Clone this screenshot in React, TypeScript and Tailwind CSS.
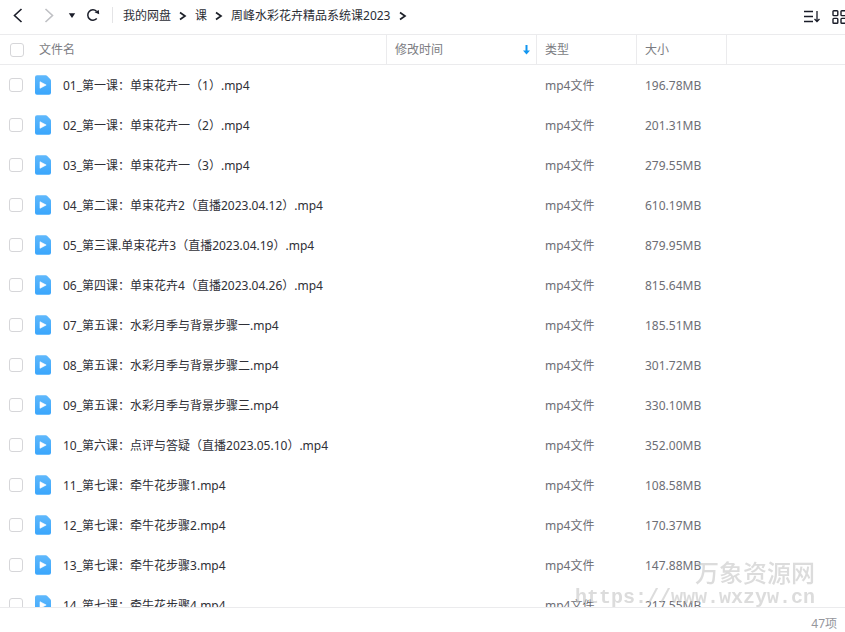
import { useState } from "react";

const files = [
  { name: "01_第一课：单束花卉一（1）.mp4", size: "196.78MB" },
  { name: "02_第一课：单束花卉一（2）.mp4", size: "201.31MB" },
  { name: "03_第一课：单束花卉一（3）.mp4", size: "279.55MB" },
  { name: "04_第二课：单束花卉2（直播2023.04.12）.mp4", size: "610.19MB" },
  { name: "05_第三课.单束花卉3（直播2023.04.19）.mp4", size: "879.95MB" },
  { name: "06_第四课：单束花卉4（直播2023.04.26）.mp4", size: "815.64MB" },
  { name: "07_第五课：水彩月季与背景步骤一.mp4", size: "185.51MB" },
  { name: "08_第五课：水彩月季与背景步骤二.mp4", size: "301.72MB" },
  { name: "09_第五课：水彩月季与背景步骤三.mp4", size: "330.10MB" },
  { name: "10_第六课：点评与答疑（直播2023.05.10）.mp4", size: "352.00MB" },
  { name: "11_第七课：牵牛花步骤1.mp4", size: "108.58MB" },
  { name: "12_第七课：牵牛花步骤2.mp4", size: "170.37MB" },
  { name: "13_第七课：牵牛花步骤3.mp4", size: "147.88MB" },
  { name: "14_第七课：牵牛花步骤4.mp4", size: "217.55MB" },
];

const path = ["我的网盘", "课", "周峰水彩花卉精品系统课2023"];

const checkboxClass =
  "block size-3.5 shrink-0 appearance-none rounded-[3px] border border-[#d6d6d9] bg-white checked:border-[#06a7ff] checked:bg-[#06a7ff]";

function VideoIcon() {
  return (
    <svg width="16" height="20" viewBox="0 0 16 20" className="shrink-0" aria-hidden="true">
      <defs>
        <linearGradient id="video-fill" x1="0" y1="0" x2="0" y2="1">
          <stop offset="0" stopColor="#5fb8fc" />
          <stop offset="1" stopColor="#3aa6fc" />
        </linearGradient>
      </defs>
      <path
        d="M2 .3h8.800q.8 0 1.400.6l3.200 3.400q.6.6.6 1.400v12a2 2 0 0 1-2 2H2a2 2 0 0 1-2-2V2.300a2 2 0 0 1 2-2z"
        fill="url(#video-fill)"
      />
      <path d="M5 6.700v6.600l6.200-3.300z" fill="#fff" stroke="#fff" strokeWidth=".6" strokeLinejoin="round" />
    </svg>
  );
}

function Separator() {
  return (
    <svg width="8" height="10" viewBox="0 0 8 10" fill="none" stroke="#1d2129" strokeWidth="1.700" aria-hidden="true">
      <path d="M1 1.500 6 5 1 8.500" />
    </svg>
  );
}

function Toolbar() {
  return (
    <header className="flex h-[34px] shrink-0 items-center overflow-hidden pb-1 pl-3">
      <nav aria-label="导航" className="flex items-center">
        <button aria-label="后退" className="w-3">
          <svg width="12" height="16" viewBox="0 0 12 16" fill="none" stroke="#1a1d29" strokeWidth="1.600">
            <path d="M9.500 2 2.500 8.500l7 6.500" />
          </svg>
        </button>
        <button aria-label="前进" className="ml-5 w-3" disabled>
          <svg width="12" height="16" viewBox="0 0 12 16" fill="none" stroke="#bfc0c4" strokeWidth="1.600">
            <path d="M1.500 2l7 6.500-7 6.500" />
          </svg>
        </button>
        <button aria-label="历史记录" className="ml-3 w-2">
          <svg width="8" height="16" viewBox="0 0 8 16" fill="#1a1d29">
            <path d="M.8 6.200h6.400L4 11z" />
          </svg>
        </button>
        <button aria-label="刷新" className="ml-2.5 w-3.5">
          <svg width="14" height="16" viewBox="0 0 14 16" fill="none" stroke="#1a1d29" strokeWidth="1.500">
            <path d="M10.500 4.200A5.200 5.200 0 1 0 10.800 11.600" />
            <path d="M8.500 5.200 12.800 3l.4 4.200z" fill="#1a1d29" stroke="none" />
          </svg>
        </button>
      </nav>
      <span className="ml-3 mr-2.5 h-4 w-px bg-[#e4e4e6]" />
      <nav aria-label="路径" className="flex items-center gap-2 whitespace-nowrap pt-px text-[#2b2d35]">
        {path.map((item) => (
          <span key={item} className="flex items-center gap-2">
            <a href="#">{item}</a>
            <Separator />
          </span>
        ))}
      </nav>
      <div className="-mr-0.5 ml-auto flex shrink-0 items-center gap-3 pt-1">
        <button aria-label="排序">
          <svg width="17" height="14" viewBox="0 0 17 14" fill="none" stroke="#1a1d29" strokeWidth="1.300">
            <path d="M1 1.500h9M1 6.500h9M1 11.500h9" />
            <path d="M14 1v10.500M11.500 9l2.500 2.500L16.500 9" />
          </svg>
        </button>
        <button aria-label="网格视图">
          <svg width="15" height="14" viewBox="0 0 15 14" fill="none" stroke="#1a1d29" strokeWidth="1.400">
            <rect x="1" y=".8" width="4.800" height="4.800" rx=".8" />
            <rect x="9" y=".8" width="4.800" height="4.800" rx=".8" />
            <rect x="1" y="8.400" width="4.800" height="4.800" rx=".8" />
            <rect x="9" y="8.400" width="4.800" height="4.800" rx=".8" />
          </svg>
        </button>
      </div>
    </header>
  );
}

export default function App() {
  const [selected, setSelected] = useState<string[]>([]);

  const toggle = (name: string) => {
    setSelected((prev) =>
      prev.includes(name) ? prev.filter((n) => n !== name) : [...prev, name]
    );
  };

  const toggleAll = () => {
    setSelected(selected.length === files.length ? [] : files.map((f) => f.name));
  };

  return (
    <div className="relative flex h-screen flex-col overflow-hidden bg-white font-['Noto_Sans','Noto_Sans_CJK_SC',sans-serif] text-xs text-[#2f3037]">
      <Toolbar />

      <main className="min-h-0 flex-1 overflow-y-auto border-t border-[#ebebed] [scrollbar-width:none]">
        <table className="w-full table-fixed border-separate border-spacing-0 text-left">
          <colgroup>
            <col className="w-[387px]" />
            <col className="w-[150px]" />
            <col className="w-[100px]" />
            <col className="w-[90px]" />
            <col />
          </colgroup>
          <thead className="sticky top-0 bg-white text-[#7b7c82]">
            <tr className="h-[30px] *:border-b *:border-[#ebebed] *:p-0 *:font-normal">
              <th className="border-r">
                <div className="flex items-center pl-2.5">
                  <input
                    type="checkbox"
                    aria-label="全选"
                    className={checkboxClass}
                    checked={selected.length === files.length}
                    onChange={toggleAll}
                  />
                  <span className="ml-[15px]">文件名</span>
                </div>
              </th>
              <th className="border-r">
                <button className="flex w-full items-center justify-between pl-2 pr-1.5">
                  修改时间
                  <svg width="7" height="10" viewBox="0 0 7 10" fill="#1296f0" aria-hidden="true">
                    <path d="M2.500 0h2v5.500H7L3.500 9.500 0 5.500h2.500z" />
                  </svg>
                </button>
              </th>
              <th className="border-r">
                <span className="pl-2">类型</span>
              </th>
              <th className="border-r">
                <span className="pl-2">大小</span>
              </th>
              <th aria-hidden="true" />
            </tr>
          </thead>
          <tbody>
            {files.map((file) => (
              <tr key={file.name} className="h-10">
                <td className="p-0">
                  <label className="flex items-center whitespace-nowrap pl-[9px]">
                    <input
                      type="checkbox"
                      className={checkboxClass}
                      checked={selected.includes(file.name)}
                      onChange={() => toggle(file.name)}
                    />
                    <span className="mx-3">
                      <VideoIcon />
                    </span>
                    <span className="pt-0.5">{file.name}</span>
                  </label>
                </td>
                <td />
                <td className="p-0 pl-2 pt-0.5 text-[#6d6e75]">mp4文件</td>
                <td className="p-0 pl-2 pt-0.5 text-[#6d6e75]">{file.size}</td>
                <td />
              </tr>
            ))}
          </tbody>
        </table>
      </main>

      <footer className="flex h-[25px] shrink-0 items-center justify-end border-t border-[#ebebed] pr-2 pt-2 text-[#95969c]">
        47项
      </footer>

      {/* watermark */}
      <div className="pointer-events-none absolute bottom-[22px] right-[30px] text-right text-[#c4c4c4]/60">
        <p className="font-['Noto_Sans_CJK_SC',sans-serif] text-2xl font-medium leading-7">万象资源网</p>
        <p className="font-['Liberation_Mono','Noto_Sans_CJK_SC',monospace] text-xl font-bold leading-6">
          https://www.wxzyw.cn
        </p>
      </div>
    </div>
  );
}
